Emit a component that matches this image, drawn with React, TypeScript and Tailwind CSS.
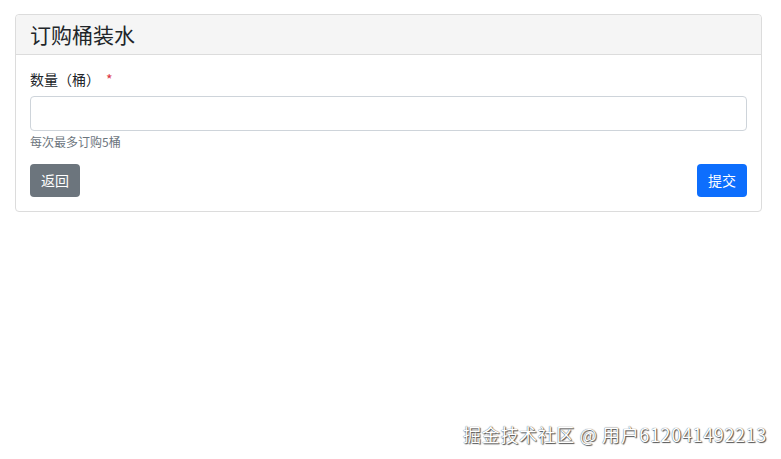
export default function App() {
  return (
    <div className="relative w-[781px] h-[459px] bg-white overflow-hidden" style={{ fontFamily: '"Noto Sans CJK SC", "Liberation Sans", sans-serif' }}>
      <div className="pt-[14px] pl-[15px] pr-[19px]">
        <div className="border border-[#dcdcdc] rounded-[4px] bg-white">
          <div className="h-[40px] bg-[#f5f5f5] border-b border-[#dcdcdc] rounded-t-[4px] px-[14px] flex items-center">
            <span className="text-[21px] leading-none text-[#212529]">订购桶装水</span>
          </div>
          <div className="px-[14px] pt-[16px] pb-[14px]">
            <div className="text-[14px] leading-[16px] text-[#212529] h-[16px] flex items-center">
              数量（桶）<span className="text-[#dc3545] ml-[6px]">*</span>
            </div>
            <div className="mt-[9px] h-[35px] border border-[#ced4da] rounded-[4px] bg-white"></div>
            <div className="mt-[4px] text-[12px] leading-[14px] text-[#6c757d]">每次最多订购5桶</div>
            <div className="mt-[15px] flex justify-between">
              <button className="h-[33px] w-[50px] rounded-[4px] bg-[#6c757d] text-white text-[14px]">返回</button>
              <button className="h-[33px] w-[50px] rounded-[4px] bg-[#0d6efd] text-white text-[14px]">提交</button>
            </div>
          </div>
        </div>
      </div>
      <div className="absolute right-[14px] top-[422px] text-[18px] leading-[24px] tracking-[0.65px] text-white" style={{ textShadow: '0 0 1px #333, 1px 1px 1px #555' }}>
        掘金技术社区 @ 用户612041492213
      </div>
    </div>
  );
}
